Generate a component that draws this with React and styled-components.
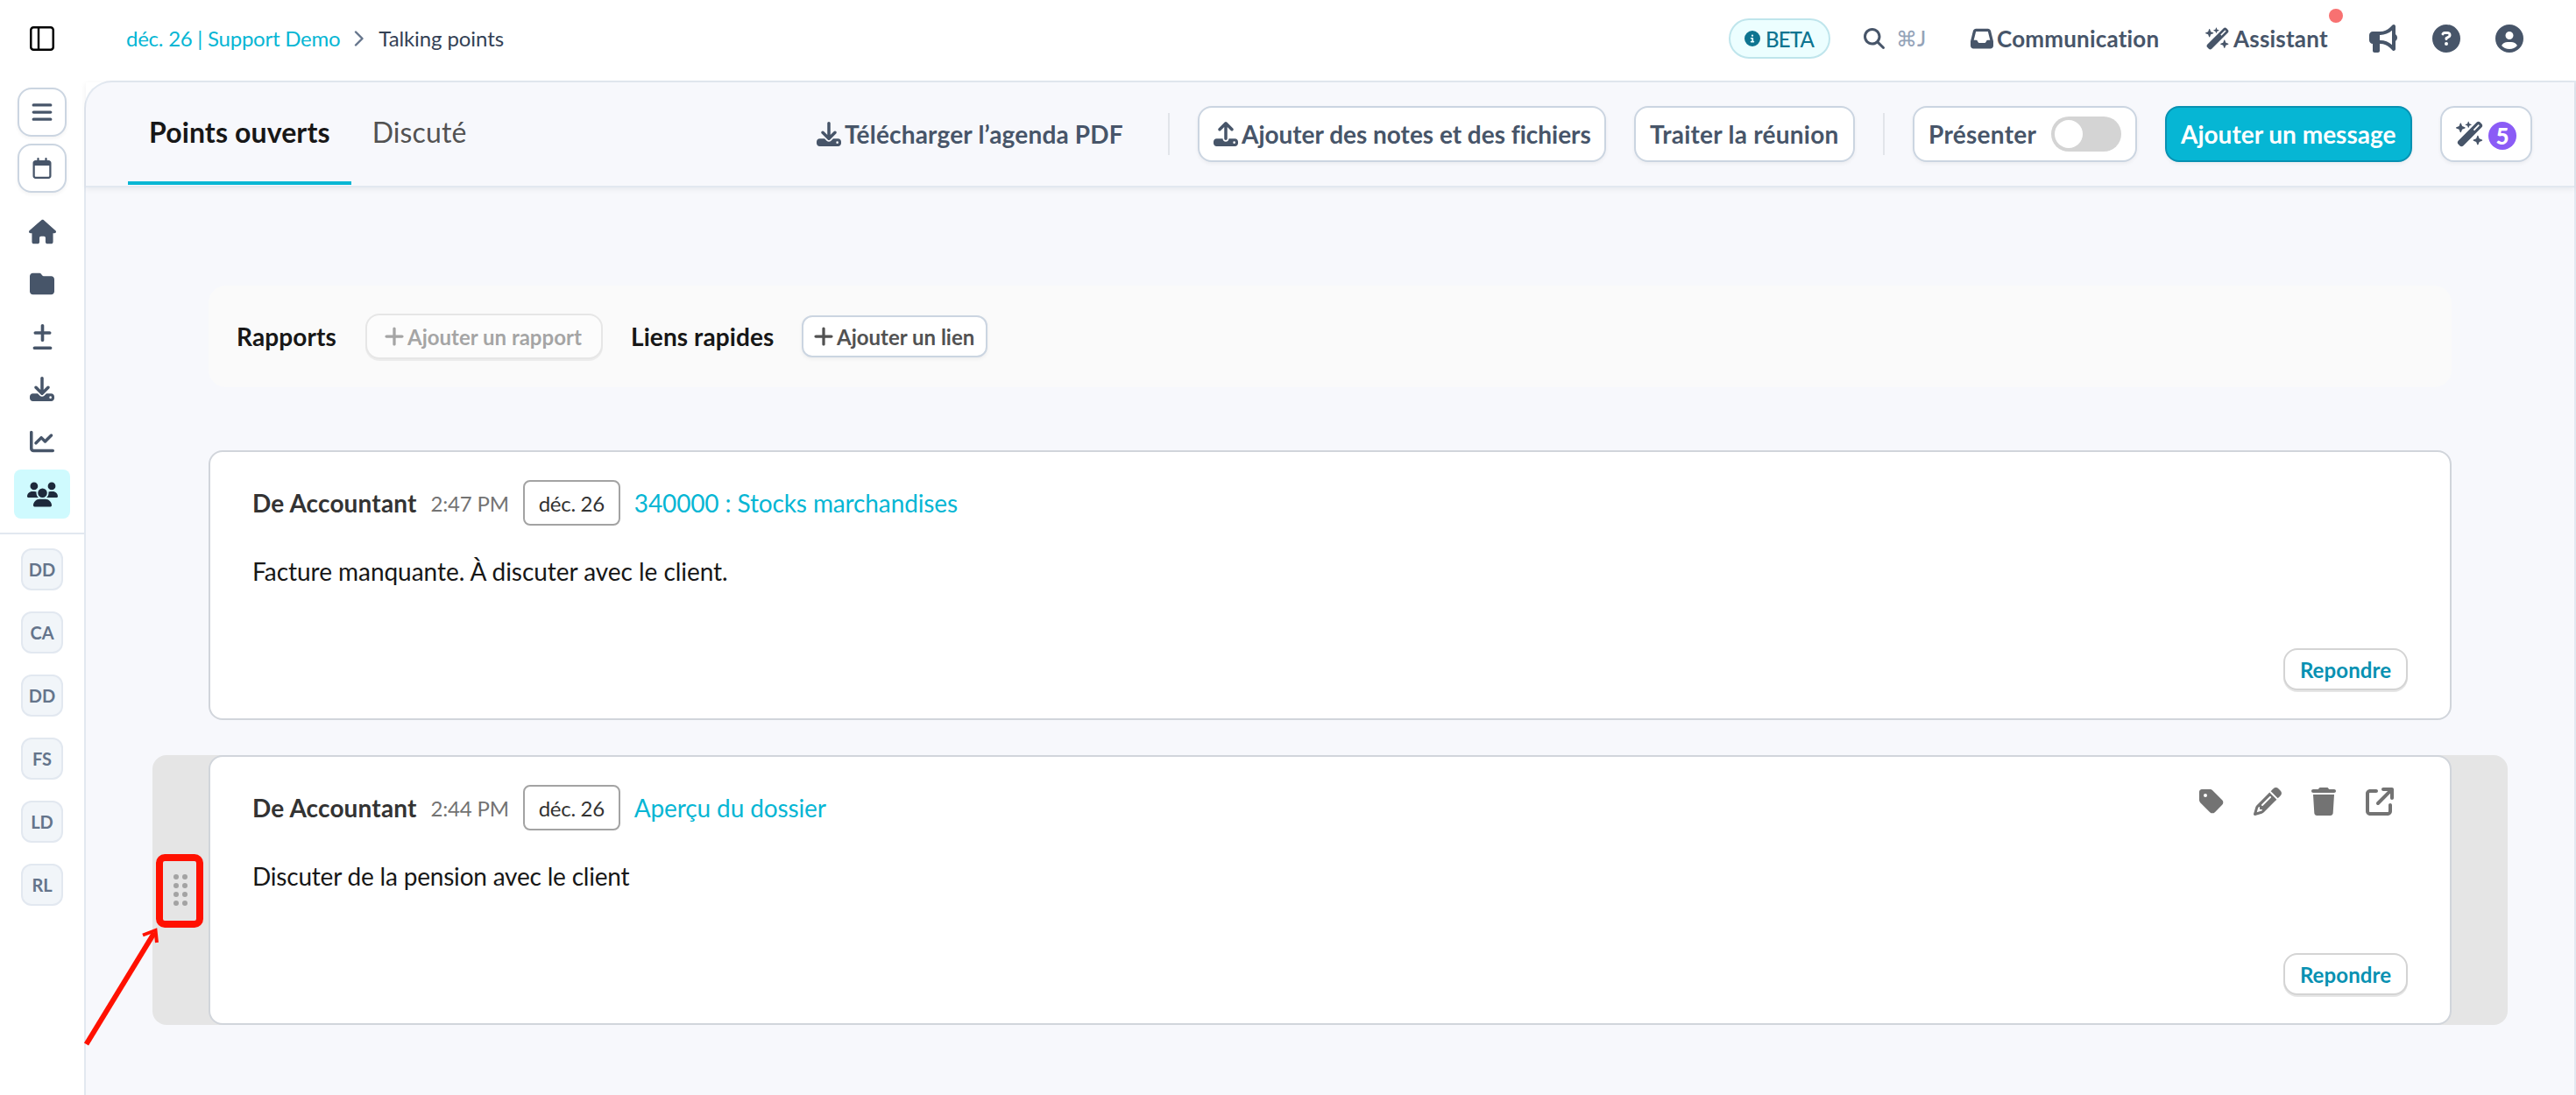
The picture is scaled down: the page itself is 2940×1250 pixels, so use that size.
import React from 'react';
import styled, { createGlobalStyle, css } from 'styled-components';
import {
  FaArrowUpRightFromSquare,
  FaBars,
  FaBullhorn,
  FaChartLine,
  FaCircleInfo,
  FaCircleQuestion,
  FaCircleUser,
  FaDownload,
  FaFolder,
  FaHouse,
  FaInbox,
  FaMagnifyingGlass,
  FaPencil,
  FaPlus,
  FaPlusMinus,
  FaRegCalendar,
  FaTag,
  FaTrash,
  FaUpload,
  FaUsers,
  FaWandMagicSparkles,
} from 'react-icons/fa6';

const C_SLATE = '#475569';
const C_SLATE_DARK = '#1e293b';
const C_LINE = '#e2e8f0';
const C_BUTTON_LINE = '#cbd5e1';
const C_CYAN = '#06b6d4';
const C_CYAN_DARK = '#0891b2';
const C_PAGE = '#f7f8fc';
const C_INK = '#171717';
const C_GREY = '#737373';
const C_RED = '#ff1100';

const GlobalStyle = createGlobalStyle`
  * {
    box-sizing: border-box;
  }

  body {
    margin: 0;
    overflow: hidden;
    background: #fff;
    font-family: Lato, 'Liberation Sans', sans-serif;
  }

  button {
    margin: 0;
    font-family: inherit;
  }

  svg {
    display: block;
    flex: none;
  }
`;

const Page = styled.div`
  display: flex;
  flex-direction: column;
  height: 1250px;
`;

/* Top bar */

const TopBar = styled.header`
  display: flex;
  align-items: center;
  flex: none;
  height: 92px;
  padding: 0 60px 4px 34px;
`;

const Breadcrumb = styled.nav`
  display: flex;
  align-items: center;
  gap: 16px;
  margin-left: 82px;
  font-size: 24px;
  line-height: 32px;
  letter-spacing: -0.1px;
  color: #334155;
`;

const BreadcrumbLink = styled.a`
  letter-spacing: -0.25px;
  color: ${C_CYAN};
`;

const TopActions = styled.div`
  display: flex;
  align-items: center;
  margin-left: auto;
  color: ${C_SLATE};
`;

const BetaBadge = styled.span`
  display: flex;
  align-items: center;
  gap: 6px;
  width: 116px;
  height: 46px;
  margin-right: 38px;
  padding-left: 16px;
  border: 2px solid #bfe5ec;
  border-radius: 23px;
  background: #ecfeff;
  font-size: 24px;
  font-weight: 500;
  letter-spacing: -0.8px;
  color: #0e7490;
`;

const Search = styled.div`
  display: flex;
  align-items: center;
  gap: 13px;
  width: 122px;
`;

const Shortcut = styled.span`
  font-size: 24px;
  font-weight: 500;
  line-height: 32px;
  color: #94a3b8;
`;

const TopLink = styled.a`
  position: relative;
  display: flex;
  align-items: center;
  gap: 4px;
  width: ${({ $width }) => $width}px;
  font-size: 26px;
  font-weight: 700;
  line-height: 32px;
  letter-spacing: 0.2px;
`;

const Notification = styled.span`
  position: absolute;
  top: -18px;
  left: 141px;
  width: 16px;
  height: 16px;
  border-radius: 50%;
  background: #f87171;
`;

const RoundActions = styled.div`
  display: flex;
  gap: 40px;
`;

/* Sidebar */

const Body = styled.div`
  display: flex;
  flex: 1;
  min-height: 0;
`;

const Sidebar = styled.aside`
  display: flex;
  flex-direction: column;
  flex: none;
  width: 96px;
  padding-top: 8px;
`;

const Switchers = styled.div`
  display: flex;
  flex-direction: column;
  align-items: center;
  gap: 8px;
  margin-bottom: 16px;
`;

const SwitcherButton = styled.button`
  display: flex;
  align-items: center;
  justify-content: center;
  width: 56px;
  height: 56px;
  padding: 0;
  border: 2px solid ${C_BUTTON_LINE};
  border-radius: 16px;
  background: #fff;
  color: ${C_SLATE};
  box-shadow: 0 2px 4px rgba(0, 0, 0, 0.05);
`;

const NavList = styled.nav`
  display: flex;
  flex-direction: column;
  align-items: center;
  gap: 4px;
  padding-bottom: 16px;
  border-bottom: 2px solid ${C_LINE};
`;

const NavItem = styled.a`
  display: flex;
  align-items: center;
  justify-content: center;
  width: 64px;
  height: 56px;
  border-radius: 8px;
  color: ${({ $active }) => ($active ? C_SLATE_DARK : C_SLATE)};
  background: ${({ $active }) => ($active ? '#cffafe' : 'transparent')};
`;

const AvatarList = styled.div`
  display: flex;
  flex-direction: column;
  align-items: center;
  gap: 24px;
  padding-top: 16px;
`;

const Avatar = styled.span`
  display: flex;
  align-items: center;
  justify-content: center;
  width: 48px;
  height: 48px;
  border: 2px solid ${C_LINE};
  border-radius: 12px;
  background: #f1f5f9;
  font-size: 20px;
  font-weight: 700;
  color: #64748b;
`;

/* Meeting toolbar */

const Main = styled.main`
  flex: 1;
  min-width: 0;
  border: 2px solid ${C_LINE};
  border-bottom: 0;
  border-top-left-radius: 32px;
  background: ${C_PAGE};
`;

const Toolbar = styled.div`
  display: flex;
  align-items: flex-start;
  height: 120px;
  padding: 0 48px;
  border-bottom: 2px solid ${C_LINE};
  box-shadow: 0 2px 6px rgba(15, 23, 42, 0.07);
`;

const Tab = styled.a`
  height: 117px;
  padding: 37px 24px 0;
  border-bottom: 4px solid ${({ $active }) => ($active ? C_CYAN : 'transparent')};
  font-size: 32px;
  font-weight: ${({ $active }) => ($active ? 700 : 400)};
  line-height: 40px;
  letter-spacing: 0.12px;
  color: ${({ $active }) => ($active ? C_INK : '#525252')};
`;

const ToolbarActions = styled.div`
  display: flex;
  align-items: center;
  margin: 27px 0 0 auto;
`;

const Button = styled.button`
  display: flex;
  align-items: center;
  gap: 4px;
  width: ${({ $width }) => $width}px;
  height: 64px;
  padding: 0 16px;
  border: 2px solid ${C_BUTTON_LINE};
  border-radius: 16px;
  background: #fff;
  box-shadow: 0 2px 4px rgba(0, 0, 0, 0.05);
  font-size: 28px;
  font-weight: 700;
  letter-spacing: ${({ $tracking = 0 }) => $tracking}px;
  white-space: nowrap;
  color: ${C_SLATE};

  ${({ $primary }) =>
    $primary &&
    css`
      border-color: ${C_CYAN_DARK};
      background: ${C_CYAN};
      color: #fff;
    `}

  ${({ $plain }) =>
    $plain &&
    css`
      border-color: transparent;
      background: transparent;
      box-shadow: none;
    `}

  & + & {
    margin-left: 32px;
  }
`;

const Separator = styled.span`
  width: 2px;
  height: 48px;
  margin: 0 32px;
  background: #e2e5ea;
`;

const Toggle = styled.span`
  width: 80px;
  height: 40px;
  margin-left: auto;
  padding: 4px;
  border-radius: 20px;
  background: #d4d4d4;
`;

const Knob = styled.span`
  display: block;
  width: 32px;
  height: 32px;
  border-radius: 50%;
  background: #fff;
`;

const Count = styled.span`
  display: flex;
  align-items: center;
  justify-content: center;
  flex: none;
  width: 32px;
  height: 32px;
  margin: 3px 0 0 1px;
  border-radius: 50%;
  background: #8b5cf6;
  font-size: 26px;
  font-weight: 900;
  line-height: 32px;
  color: #fff;
`;

/* Content */

const LinksPanel = styled.section`
  display: flex;
  align-items: center;
  width: 2560px;
  height: 116px;
  margin: 112px 0 72px 140px;
  padding-left: 32px;
  border-radius: 20px;
  background: #fafafa;
`;

const PanelTitle = styled.h2`
  width: ${({ $width }) => $width}px;
  margin: 0;
  font-size: 28px;
  font-weight: 700;
  line-height: 36px;
  letter-spacing: 0.1px;
  color: ${C_INK};
`;

const AddButton = styled.button`
  display: flex;
  align-items: center;
  gap: 2px;
  width: ${({ $width }) => $width}px;
  height: 48px;
  padding: 0 0 0 10px;
  border: 2px solid ${C_BUTTON_LINE};
  border-radius: 12px;
  background: #fff;
  box-shadow: 0 2px 4px rgba(0, 0, 0, 0.05);
  font-size: 24px;
  font-weight: 700;
  white-space: nowrap;
  color: #525252;

  &:disabled {
    height: 52px;
    margin-right: 32px;
    padding-left: 18px;
    border-color: #d4d4d4;
    border-radius: 16px;
    box-shadow: 0 2px 0 rgba(0, 0, 0, 0.1);
    opacity: 0.5;
  }
`;

const MessageRow = styled.div`
  position: relative;
  display: flex;
  width: 2688px;
  height: 308px;
  margin: 0 0 40px 76px;
  border-radius: 16px;
  background: ${({ $hovered }) => ($hovered ? '#e5e5e5' : 'transparent')};
`;

const Handle = styled.div`
  display: grid;
  grid-template-columns: 6px 6px;
  gap: 4px;
  align-content: center;
  justify-content: end;
  width: 64px;
  padding: 0 24px 0 0;
`;

const Dot = styled.i`
  width: 6px;
  height: 6px;
  border-radius: 50%;
  background: ${({ $visible }) => ($visible ? '#a3a3a3' : 'transparent')};
`;

const Card = styled.article`
  display: flex;
  flex-direction: column;
  width: 2560px;
  padding: 32px 48px;
  border: 2px solid #d1d5db;
  border-radius: 16px;
  background: #fff;
`;

const CardHeader = styled.header`
  display: flex;
  align-items: center;
  height: 52px;
`;

const Author = styled.strong`
  margin-right: 16px;
  font-size: 28px;
  font-weight: 700;
  letter-spacing: 0.15px;
  color: #333;
`;

const Time = styled.time`
  margin-right: 16px;
  font-size: 24px;
  letter-spacing: -0.2px;
  color: ${C_GREY};
`;

const Period = styled.span`
  display: flex;
  align-items: center;
  justify-content: center;
  width: 111px;
  height: 52px;
  margin-right: 16px;
  border: 2px solid #a3a3a3;
  border-radius: 8px;
  font-size: 24px;
  letter-spacing: -0.3px;
  color: #333;
`;

const Subject = styled.a`
  font-size: 28px;
  letter-spacing: -0.12px;
  color: ${C_CYAN};
`;

const CardActions = styled.div`
  display: flex;
  align-items: center;
  gap: 32px;
  margin: -14px 16px 0 auto;
  color: ${C_GREY};
`;

const Text = styled.p`
  margin: 32px 0 0;
  font-size: 28px;
  line-height: 40px;
  letter-spacing: ${({ $tracking }) => $tracking}px;
  color: ${C_INK};
`;

const ReplyButton = styled.button`
  align-self: flex-end;
  width: 142px;
  height: 48px;
  margin-top: auto;
  padding: 0;
  border: 2px solid #d4d4d4;
  border-radius: 16px;
  background: #fff;
  box-shadow: 0 2px 0 rgba(0, 0, 0, 0.1);
  font-size: 24px;
  font-weight: 700;
  letter-spacing: 0.1px;
  color: ${C_CYAN_DARK};
`;

const Annotation = styled.svg`
  position: absolute;
  top: 108px;
  left: -84px;
`;

const navItems = [
  { icon: <FaHouse size={31} /> },
  { icon: <FaFolder size={28} /> },
  { icon: <FaPlusMinus size={29} /> },
  { icon: <FaDownload size={28} /> },
  { icon: <FaChartLine size={28} /> },
  { icon: <FaUsers size={35} />, active: true },
];

const members = ['DD', 'CA', 'DD', 'FS', 'LD', 'RL'];

const messages = [
  {
    time: '2:47 PM',
    subject: '340000 : Stocks marchandises',
    text: 'Facture manquante. À discuter avec le client.',
    tracking: -0.04,
  },
  {
    time: '2:44 PM',
    subject: 'Aperçu du dossier',
    text: 'Discuter de la pension avec le client',
    tracking: -0.2,
    hovered: true,
  },
];

const PanelIcon = () => (
  <svg width="28" height="28" viewBox="0 0 28 28" fill="none" stroke="#000">
    <rect x="1.25" y="1.25" width="25.5" height="25.5" rx="3" strokeWidth="2.5" />
    <path d="M10 1.5v25" strokeWidth="2.4" />
  </svg>
);

const Chevron = () => (
  <svg width="12" height="18" viewBox="0 0 12 18" fill="none">
    <path d="M2 1.5 9.5 9 2 16.5" stroke="#64748b" strokeWidth="2.4" strokeLinecap="round" strokeLinejoin="round" />
  </svg>
);

const HandleAnnotation = () => (
  <Annotation width="150" height="230" viewBox="0 0 150 230" fill="none" stroke={C_RED}>
    <rect x="92" y="9" width="46" height="76" rx="6" strokeWidth="8" />
    <path d="M8.500 222 86 95" strokeWidth="6" />
    <path d="M73 97.500 87.500 92 89 106" strokeWidth="4" />
  </Annotation>
);

const Message = ({ time, subject, text, tracking, hovered }) => (
  <MessageRow $hovered={hovered}>
    <Handle>
      {Array.from({ length: 8 }, (_, i) => (
        <Dot key={i} $visible={hovered} />
      ))}
    </Handle>
    <Card>
      <CardHeader>
        <Author>De Accountant</Author>
        <Time>{time}</Time>
        <Period>déc. 26</Period>
        <Subject>{subject}</Subject>
        {hovered && (
          <CardActions>
            <FaTag size={32} />
            <FaPencil size={32} />
            <FaTrash size={32} />
            <FaArrowUpRightFromSquare size={32} />
          </CardActions>
        )}
      </CardHeader>
      <Text $tracking={tracking}>{text}</Text>
      <ReplyButton>Repondre</ReplyButton>
    </Card>
    {hovered && <HandleAnnotation />}
  </MessageRow>
);

const App = () => (
  <Page>
    <GlobalStyle />
    <TopBar>
      <PanelIcon />
      <Breadcrumb>
        <BreadcrumbLink>déc. 26 | Support Demo</BreadcrumbLink>
        <Chevron />
        <span>Talking points</span>
      </Breadcrumb>
      <TopActions>
        <BetaBadge>
          <FaCircleInfo size={18} />
          BETA
        </BetaBadge>
        <Search>
          <FaMagnifyingGlass size={24} />
          <Shortcut>⌘J</Shortcut>
        </Search>
        <TopLink $width={268}>
          <FaInbox size={26} />
          Communication
        </TopLink>
        <TopLink $width={187}>
          <FaWandMagicSparkles size={28} />
          Assistant
          <Notification />
        </TopLink>
        <RoundActions>
          <FaBullhorn size={32} />
          <FaCircleQuestion size={32} />
          <FaCircleUser size={32} />
        </RoundActions>
      </TopActions>
    </TopBar>
    <Body>
      <Sidebar>
        <Switchers>
          <SwitcherButton>
            <FaBars size={26} />
          </SwitcherButton>
          <SwitcherButton>
            <FaRegCalendar size={24} />
          </SwitcherButton>
        </Switchers>
        <NavList>
          {navItems.map(({ icon, active }, i) => (
            <NavItem key={i} $active={active}>
              {icon}
            </NavItem>
          ))}
        </NavList>
        <AvatarList>
          {members.map((initials, i) => (
            <Avatar key={i}>{initials}</Avatar>
          ))}
        </AvatarList>
      </Sidebar>
      <Main>
        <Toolbar>
          <Tab $active>Points ouverts</Tab>
          <Tab>Discuté</Tab>
          <ToolbarActions>
            <Button $plain $width={387} $tracking={0.18}>
              <FaDownload size={28} />
              Télécharger l’agenda PDF
            </Button>
            <Separator />
            <Button $width={466} $tracking={-0.02}>
              <FaUpload size={28} />
              Ajouter des notes et des fichiers
            </Button>
            <Button $width={252} $tracking={0.25}>
              Traiter la réunion
            </Button>
            <Separator />
            <Button as="div" $width={256} $tracking={0.3}>
              Présenter
              <Toggle>
                <Knob />
              </Toggle>
            </Button>
            <Button $primary $width={282}>
              Ajouter un message
            </Button>
            <Button $width={105}>
              <FaWandMagicSparkles size={32} />
              <Count>5</Count>
            </Button>
          </ToolbarActions>
        </Toolbar>
        <LinksPanel>
          <PanelTitle $width={147}>Rapports</PanelTitle>
          <AddButton $width={271} disabled>
            <FaPlus size={26} />
            Ajouter un rapport
          </AddButton>
          <PanelTitle $width={195}>Liens rapides</PanelTitle>
          <AddButton $width={212}>
            <FaPlus size={26} />
            Ajouter un lien
          </AddButton>
        </LinksPanel>
        {messages.map((message) => (
          <Message key={message.time} {...message} />
        ))}
      </Main>
    </Body>
  </Page>
);

export default App;
